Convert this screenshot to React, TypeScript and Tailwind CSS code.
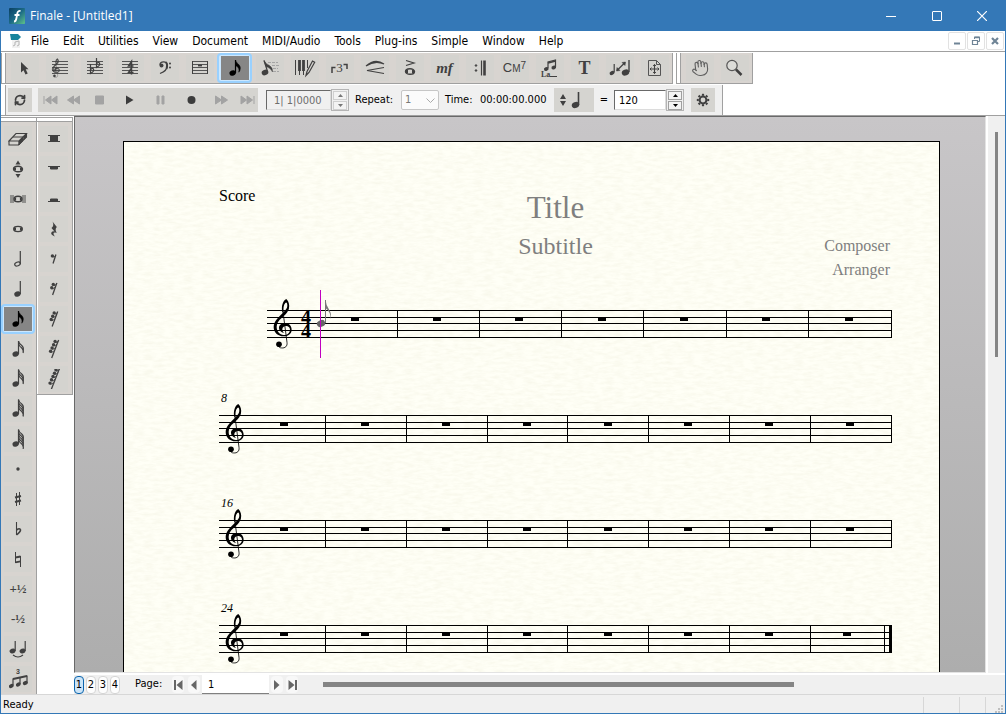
import type { ReactNode } from 'react';
import { Hand, RefreshCw } from 'lucide-react';

const MENUS = ['File', 'Edit', 'Utilities', 'View', 'Document', 'MIDI/Audio', 'Tools', 'Plug-ins', 'Simple', 'Window', 'Help'];

const INK = '#404040';

/* ---------- shared music shapes ---------- */

// drawn in a 60x150 box, the staff starts 34 units from the top
function Clef({ transform, color = '#000' }: { transform?: string; color?: string }) {
  return (
    <g transform={transform} fill={color}>
      <path d="M28 40C24 22 30 4 40 0C48 8 50 18 48 28C46 40 34 50 26 57C16 65 11 74 11 84C11 97 20 107 32 108C44 108 51 101 51 92C51 84 44 80 38 81C31 82 26 88 29 96C30 99 33 101 33 102C24 100 18 94 18 87C18 77 27 72 36 72C47 72 56 80 56 92C56 104 46 112 32 112C14 112 2 100 2 84C2 68 14 58 24 47C32 39 43 30 43 20C43 12 40 8 37 12C31 18 31 28 32 40Z" />
      <path d="M30 38L42 130C44 142 36 148 26 147C20 147 18 144 16 142" fill="none" stroke={color} strokeWidth="2.5" />
      <circle cx="18" cy="136" r="8.5" />
    </g>
  );
}

function Head({ x, y, r = 3.1, color = INK, hollow = false }: { x: number; y: number; r?: number; color?: string; hollow?: boolean }) {
  return (
    <ellipse
      cx={x}
      cy={y}
      rx={hollow ? r - 0.4 : r}
      ry={hollow ? r * 0.55 : r * 0.78}
      transform={`rotate(-22 ${x} ${y})`}
      fill={hollow ? 'none' : color}
      stroke={hollow ? color : 'none'}
      strokeWidth="1.2"
    />
  );
}

function NoteIcon({ flags = 0, hollow = false, color = INK }: { flags?: number; hollow?: boolean; color?: string }) {
  const dx = flags ? 7.7 : 9.5;
  const stem = dx + 2.8;
  const top = flags > 2 ? 0.5 : 2;
  return (
    <svg width="20" height="20" viewBox="0 0 20 20" fill="none">
      <Head x={dx} y={15} r={3.3} hollow={hollow} color={color} />
      <path d={`M${stem} 15V${top}`} stroke={color} strokeWidth="1.2" />
      {flags === 1 && <path d="M10.500 2C11 5.500 15.800 6.500 15.300 10.500Q15.200 12.500 13.800 14.200Q15 9.500 10.500 7.500Z" fill={color} stroke={color} strokeWidth=".5" />}
      {flags > 1 &&
        Array.from({ length: flags }, (_, i) => (
          <path key={i} d={`M${stem} ${top + i * 2.5}q.5 2.500 3 4.300t1.600 5.200`} stroke={color} strokeWidth="1.2" />
        ))}
    </svg>
  );
}

function RestIcon({ count }: { count: number }) {
  const h = 6 + count * 3;
  const top = 10 - h / 2;
  const slant = count * 0.9;
  return (
    <svg width="20" height="20" viewBox="0 0 20 20" fill={INK}>
      <path d={`M${11 + slant} ${top}L${9.5 - slant / 2} ${top + h}`} stroke={INK} strokeWidth="1.3" />
      {Array.from({ length: count }, (_, i) => {
        const x = 7.5 + slant - i * 1.5;
        const y = top + 1.4 + i * 3.3;
        return (
          <g key={i}>
            <circle cx={x} cy={y} r="1.7" />
            <path d={`M${x} ${y + 1}q2 .7 3.400 -1.700`} fill="none" stroke={INK} strokeWidth=".9" />
          </g>
        );
      })}
    </svg>
  );
}

function Svg({ children, size = 20 }: { children: ReactNode; size?: number }) {
  return (
    <svg width={size} height={size} viewBox={`0 0 ${size} ${size}`} fill="none" stroke={INK}>
      {children}
    </svg>
  );
}

const staffLines = [4, 7, 10, 13, 16].map((y) => <path key={y} d={`M2 ${y - 0.5}h16`} stroke="#555" />);

/* ---------- tool definitions ---------- */

type Tool = { label: string; icon: ReactNode; active?: boolean };

const MAIN_TOOLS: Tool[] = [
  {
    label: 'Selection',
    icon: <Svg><path d="M6 4v10.500l2.500-2.300L10.500 16.500l2.200-1-2-4.200H13.500Z" fill={INK} stroke="none" /></Svg>,
  },
  {
    label: 'Staff',
    icon: <Svg>{staffLines}<g stroke={INK} strokeWidth="3"><Clef color={INK} transform="translate(2 .5) scale(.135 .128)" /></g></Svg>,
  },
  {
    label: 'Key Signature',
    icon: (
      <Svg>
        {staffLines}
        <path d="M5.500 6v9.500q4-2 3-4.500Q7 9.500 5.500 12M11.500 0v9.500q4-2 3-4.500Q13 3.500 11.500 6" strokeWidth="1.200" />
      </Svg>
    ),
  },
  {
    label: 'Time Signature',
    icon: <Svg>{staffLines}<path d="M11.500 10V3.500L8.500 8h5M11.500 16.500V10L8.500 14.500h5" strokeWidth="1.500" /></Svg>,
  },
  {
    label: 'Clef',
    icon: (
      <Svg>
        <circle cx="6.500" cy="7.500" r="2" fill={INK} stroke="none" />
        <path d="M5 7C5 3 12 2.500 12.300 7.500C12.300 11.500 9 14 5 15.500" strokeWidth="1.300" />
        <path d="M11 4q2 3 .5 7" strokeWidth="1.800" />
        <circle cx="15" cy="5.500" r="1" fill={INK} stroke="none" />
        <circle cx="15" cy="9.500" r="1" fill={INK} stroke="none" />
      </Svg>
    ),
  },
  {
    label: 'Measure',
    icon: <Svg>{staffLines}<path d="M2.500 3v13M17.500 3v13" /><path d="M8 7.500h4" strokeWidth="1.800" /></Svg>,
  },
  { label: 'Simple Entry', icon: <NoteIcon flags={1} color="#000" />, active: true },
  {
    label: 'Speedy Entry',
    icon: (
      <Svg>
        <path d="M8 4.500h10M12 7.500h7M13 10.500h5M13 13.500h6" stroke="#a5a5a5" strokeDasharray="3 1" />
        <Head x={5} y={14.5} r={3.4} />
        <path d="M7.700 14L4 2.500" strokeWidth="1.200" />
        <path d="M4 2.500Q6 6 9.500 7.500Q13 9.500 12.500 14Q11 10 6 8.500Z" fill={INK} strokeWidth=".4" />
      </Svg>
    ),
  },
  {
    label: 'HyperScribe',
    icon: (
      <Svg size={22}>
        <path d="M1.500 3v15M16 3" />
        <path d="M5.500 3v11M9.500 3v11" strokeWidth="2.800" />
        <path d="M5.500 13v5M9.500 13v5M13.500 3v8" />
        <path d="M12 18.500l1-4L18.500 4l2.200 1.300L15 15.500Z" strokeWidth="1.200" />
      </Svg>
    ),
  },
  {
    label: 'Tuplet',
    icon: (
      <>
        <svg width="5" height="12" viewBox="0 0 5 12"><path d="M1 11V5.500h3.500" fill="none" stroke={INK} strokeWidth="1.500" /></svg>
        <span className="text-[13px] leading-4">3</span>
        <svg width="5" height="12" viewBox="0 0 5 12"><path d="M.5 2.500H4V7" fill="none" stroke={INK} strokeWidth="1.500" /></svg>
      </>
    ),
  },
  {
    label: 'Smart Shape',
    icon: <Svg><path d="M1 8q9-8 18-2Q10 2 1 8M19 9.500L2 12.500l17 3" strokeWidth="1.100" /></Svg>,
  },
  {
    label: 'Articulation',
    icon: <Svg><path d="M6 2.500l8 2.500L6 7.500" strokeWidth="1.200" /><ellipse cx="10" cy="13.500" rx="4.500" ry="2.800" strokeWidth="1.400" /><path d="M7 12v3M13 12v3" strokeWidth="2" /></Svg>,
  },
  { label: 'Expression', icon: <span className="text-[15px] leading-4 font-bold italic">mf</span> },
  {
    label: 'Repeat',
    icon: <Svg><path d="M11.500 2.500v15" strokeWidth="1.200" /><path d="M14.500 2.500v15" strokeWidth="2.600" /><circle cx="6" cy="7.500" r=".8" fill={INK} /><circle cx="6" cy="12.500" r=".8" fill={INK} /></Svg>,
  },
  {
    label: 'Chord',
    icon: <span className="flex font-['Liberation_Sans'] text-[13px] leading-4">C<span className="pt-px text-[10px]">M</span><span className="-mt-0.5 text-[10px]">7</span></span>,
  },
  {
    label: 'Lyric',
    icon: (
      <Svg>
        <path d="M8 10V4L15.500 2v7" strokeWidth="1.200" />
        <path d="M8 5L15.500 3" strokeWidth="1.800" />
        <Head x={6.3} y={11} r={2.4} />
        <Head x={13.8} y={9.5} r={2.4} />
        <text x="1" y="19" fontSize="8" fontFamily="Liberation Serif" fontWeight="bold" fill={INK} stroke="none">La</text>
        <path d="M10 18.500h7" />
      </Svg>
    ),
  },
  { label: 'Text', icon: <span className="text-lg leading-5 font-bold">T</span> },
  {
    label: 'Resize',
    icon: (
      <Svg size={24}>
        <Head x={4} y={17} r={2.5} />
        <path d="M6.200 16.500V8" strokeWidth="1.200" />
        <Head x={17.5} y={16.5} r={3.8} />
        <path d="M21 16V4" strokeWidth="1.400" />
        <path d="M9 14.500l8-8" strokeWidth="1.200" />
        <path d="M17.500 6l-.5 3.500-3-3ZM8.500 15l.5-3.500 3 3Z" fill={INK} strokeWidth=".5" />
      </Svg>
    ),
  },
  {
    label: 'Page Layout',
    icon: <Svg><path d="M3.500 2.500h8l4 4v11h-12ZM11.500 2.500v4h4" stroke="#555" /><path d="M9.500 6.500v9M5 11h9" strokeWidth="1.100" /><path d="M8 8l1.500-1.500L11 8M8 14l1.500 1.500L11 14M6.500 9.500L5 11l1.500 1.500M12.500 9.500L14 11l-1.500 1.500" strokeWidth=".9" /></Svg>,
  },
];

const VIEW_TOOLS: Tool[] = [
  { label: 'Hand Grabber', icon: <Hand size={18} color="#606060" strokeWidth={1.5} className="-rotate-6" /> },
  {
    label: 'Zoom',
    icon: <Svg><circle cx="7" cy="7.500" r="5.200" fill="#dcdcd8" stroke="#555" strokeWidth="1.200" /><path d="M11 11.500l5.500 5.500" strokeWidth="2.500" /></Svg>,
  },
];

const ENTRY_TOOLS: Tool[] = [
  {
    label: 'Eraser',
    icon: <Svg><path d="M1 12L8 4.500h10.500L11 12ZM1 12v4h9.500L18.500 8V4.500" strokeWidth="1.100" /><path d="M11 12v4M5 8l10.500 0" strokeWidth="1.100" /><path d="M11 12l4-4v4l-4 4ZM15.500 7.500l3-3V8l-3 3Z" fill={INK} strokeWidth=".5" /></Svg>,
  },
  {
    label: 'Repitch',
    icon: <Svg><path d="M10 1.500l2.500 4h-5ZM10 19l2.500-4h-5Z" fill={INK} stroke="none" /><ellipse cx="10" cy="10" rx="4.500" ry="2.800" strokeWidth="1.400" /><path d="M7 8.500v3M13 8.500v3" strokeWidth="2" /></Svg>,
  },
  {
    label: 'Double Whole Note',
    icon: <Svg><path d="M3 6v8M5 6v8M15 6v8M17 6v8" strokeWidth=".9" /><ellipse cx="10" cy="10" rx="4" ry="2.800" strokeWidth="1.400" /><path d="M7.200 8.500v3M12.800 8.500v3" strokeWidth="1.800" /></Svg>,
  },
  { label: 'Whole Note', icon: <Svg><ellipse cx="10" cy="10" rx="4.300" ry="2.600" strokeWidth="1.400" /><path d="M7 8.500v3M13 8.500v3" strokeWidth="2" /></Svg> },
  { label: 'Half Note', icon: <NoteIcon hollow /> },
  { label: 'Quarter Note', icon: <NoteIcon /> },
  { label: 'Eighth Note', icon: <NoteIcon flags={1} color="#000" />, active: true },
  { label: '16th Note', icon: <NoteIcon flags={2} /> },
  { label: '32nd Note', icon: <NoteIcon flags={3} /> },
  { label: '64th Note', icon: <NoteIcon flags={4} /> },
  { label: '128th Note', icon: <NoteIcon flags={5} /> },
  { label: 'Dot', icon: <Svg><circle cx="10" cy="10" r="1.700" fill={INK} stroke="none" /></Svg> },
  { label: 'Sharp', icon: <Svg><path d="M8.500 4v13M11.500 3v13" /><path d="M7 8.500l6-1.500M7 13l6-1.500" strokeWidth="1.900" /></Svg> },
  { label: 'Flat', icon: <Svg><path d="M8.500 3v13" strokeWidth="1.100" /><path d="M8.500 16C11 14 12.500 12.500 12.500 11Q12 8.500 8.500 11" strokeWidth="1.600" /></Svg> },
  { label: 'Natural', icon: <Svg><path d="M7.500 3v11M12.500 7v11" /><path d="M7.500 8.500l5-1M7.500 13.300l5-1" strokeWidth="1.800" /></Svg> },
  { label: 'Half Step Up', icon: <span className="text-[13px] leading-4 font-bold">+½</span> },
  { label: 'Half Step Down', icon: <span className="text-[13px] leading-4 font-bold">-½</span> },
  {
    label: 'Tie',
    icon: <Svg><Head x={4.5} y={12} r={3} /><path d="M7.200 12V2M17.200 12V2" strokeWidth="1.200" /><Head x={14.5} y={12} r={3} /><path d="M5 16q5 4 10 0" strokeWidth="1.200" /></Svg>,
  },
  {
    label: 'Tuplet Entry',
    icon: (
      <Svg>
        <text x="8" y="5" fontSize="7" fontWeight="bold" fontFamily="Liberation Sans" fill={INK} stroke="none">3</text>
        <path d="M5 16.500V9.500M19 6.500v7.500M12 15V8" strokeWidth="1.200" />
        <path d="M5 10L19 7" strokeWidth="1.800" />
        <Head x={3.3} y={17} r={2.5} />
        <Head x={10.3} y={15.5} r={2.5} />
        <Head x={17.3} y={14} r={2.5} />
      </Svg>
    ),
  },
];

const REST_TOOLS: Tool[] = [
  { label: 'Double Whole Rest', icon: <Svg><path d="M4 6.500h12M4 12.500h12" /><path d="M6.500 7h7v5h-7Z" fill={INK} /></Svg> },
  { label: 'Whole Rest', icon: <Svg><path d="M4 7.500h12" /><path d="M6.500 7.500h7v2.500h-7Z" fill={INK} /></Svg> },
  { label: 'Half Rest', icon: <Svg><path d="M4 12.500h12" /><path d="M6.500 10h7v2h-7Z" fill={INK} /></Svg> },
  {
    label: 'Quarter Rest',
    icon: <Svg><path d="M8.500 2.500L12.800 8Q10.500 10.500 12.800 13.800Q9.500 13 9.500 14.500T11 17.500Q6 15.500 7.500 13.200Q8.500 12 10.500 12.500L7.500 9Q10.500 6.500 8.500 2.500Z" fill={INK} stroke="none" /></Svg>,
  },
  { label: 'Eighth Rest', icon: <RestIcon count={1} /> },
  { label: '16th Rest', icon: <RestIcon count={2} /> },
  { label: '32nd Rest', icon: <RestIcon count={3} /> },
  { label: '64th Rest', icon: <RestIcon count={4} /> },
  { label: '128th Rest', icon: <RestIcon count={5} /> },
];

function ToolButton({ label, icon, active, slim }: Tool & { slim?: boolean }) {
  return (
    <button
      type="button"
      aria-label={label}
      aria-pressed={!!active}
      className={`flex h-[30px] shrink-0 items-center justify-center rounded-sm border-2 ${slim ? 'w-[34px]' : 'w-[35px]'} ${active ? 'border-[#99d1ff] bg-[#cce8ff]' : 'border-transparent'}`}
    >
      <span
        className={`flex w-7 items-center justify-center font-['Liberation_Serif',serif] text-[#404040] ${active ? 'h-6 bg-[#868686]' : 'h-[26px] bg-[#d4d3cf]'}`}
      >
        {icon}
      </span>
    </button>
  );
}

function Grip() {
  return <div className="mr-px h-[30px] w-[5px] shrink-0 border-x border-[#a0a0a0] bg-white" />;
}

/* ---------- window chrome ---------- */

function TitleBar() {
  return (
    <header className="flex h-[31px] shrink-0 items-center bg-[#3478b7] pl-[9px] text-white">
      <svg width="16" height="16" viewBox="0 0 16 16">
        <defs>
          <linearGradient id="logo" x1="0" y1="0" x2="1" y2="1">
            <stop offset="0" stopColor="#0a3f63" />
            <stop offset=".5" stopColor="#1b6a86" />
            <stop offset="1" stopColor="#5fc38a" />
          </linearGradient>
        </defs>
        <rect width="16" height="16" rx="1" fill="url(#logo)" />
        <path d="M5 13.500Q7 13.500 7.500 10L8.300 5.500Q8.800 2.500 11.500 3M5.500 7h5" fill="none" stroke="#fff" strokeWidth="1.800" />
      </svg>
      <h1 className="ml-[5px] flex-1 font-['Open_Sans',sans-serif] text-xs">Finale - [Untitled1]</h1>
      <button type="button" aria-label="Minimize" className="flex h-full w-[46px] items-center justify-center">
        <svg width="10" height="10"><path d="M0 5.500h10" stroke="#fff" /></svg>
      </button>
      <button type="button" aria-label="Maximize" className="flex h-full w-[45px] items-center justify-center">
        <svg width="10" height="10"><rect x=".5" y=".5" width="9" height="9" rx=".5" fill="none" stroke="#fff" /></svg>
      </button>
      <button type="button" aria-label="Close" className="mr-px flex h-full w-[46px] items-center justify-center">
        <svg width="10" height="10"><path d="M0 0l10 10M10 0L0 10" stroke="#fff" strokeWidth="1.200" /></svg>
      </button>
    </header>
  );
}

function MenuBar() {
  const box = 'flex h-[18px] w-[18px] items-center justify-center rounded-xs border border-[#e2e2e2] bg-white';
  return (
    <nav className="flex h-[21px] shrink-0 items-center border-b border-[#a0a0a0] bg-white pr-px pl-2">
      <svg width="14" height="16" viewBox="0 0 14 16">
        <path d="M1 1h8l3 3-3 3H2Z" fill="#17849c" />
        <path d="M3 7h8v8H3Z" fill="#f1f1f1" />
        <path d="M4 13l2-1V9l4-1v4l-2 1" fill="none" stroke="#b5b5b5" />
      </svg>
      <ul className="ml-px flex flex-1 text-xs text-black">
        {MENUS.map((menu) => (
          <li key={menu}>
            <button type="button" className="px-[7px]">{menu}</button>
          </li>
        ))}
      </ul>
      <div className="flex gap-px">
        <button type="button" aria-label="Minimize document" className={box}>
          <svg width="8" height="8"><path d="M1 6.500h6" stroke="#6f8496" strokeWidth="2" /></svg>
        </button>
        <button type="button" aria-label="Restore document" className={box}>
          <svg width="10" height="10" fill="none" stroke="#6f8496"><path d="M3.500 3V1h5v4.500H7" /><path d="M3 1.500h6" strokeWidth="1.500" /><path d="M1.500 4.500h5v4h-5Z" strokeWidth="1.200" /></svg>
        </button>
        <button type="button" aria-label="Close document" className={box}>
          <svg width="8" height="8"><path d="M1 1l6 6M7 1L1 7" stroke="#6f8496" strokeWidth="2.200" /></svg>
        </button>
      </div>
    </nav>
  );
}

function MainToolbar() {
  return (
    <div className="flex shrink-0 pt-px">
      <div className="flex border-r border-b border-[#a0a0a0] bg-[#d8d4d0]">
        <Grip />
        {MAIN_TOOLS.map((tool) => <ToolButton key={tool.label} {...tool} />)}
      </div>
      <div className="ml-[3px] flex border-r border-b border-[#a0a0a0] bg-[#d8d4d0]">
        <Grip />
        {VIEW_TOOLS.map((tool) => <ToolButton key={tool.label} {...tool} />)}
      </div>
    </div>
  );
}

function Spinner({ label, dim }: { label: string; dim?: boolean }) {
  const color = dim ? '#777' : '#000';
  const cls = `flex h-[9px] w-3.5 items-center justify-center border ${dim ? 'border-[#cfcfcf]' : 'border-[#a0a0a0]'} bg-[#f3f3f3]`;
  return (
    <span className="flex h-[22px] w-[18px] flex-col items-center justify-center gap-px border border-[#b4b4b4]">
      <button type="button" aria-label={`${label} up`} className={cls}>
        <svg width="5" height="3"><path d="M0 3L2.500 0 5 3Z" fill={color} /></svg>
      </button>
      <button type="button" aria-label={`${label} down`} className={cls}>
        <svg width="5" height="3"><path d="M0 0L2.500 3 5 0Z" fill={color} /></svg>
      </button>
    </span>
  );
}

const TRANSPORT = [
  { label: 'Rewind to Beginning', width: 'w-6', d: 'M1 2v8M8 2v8L2.500 6ZM14 2v8L8.500 6Z', dim: true },
  { label: 'Rewind', width: 'w-[22px]', d: 'M7.500 2v8L1.500 6ZM13.500 2v8L7.500 6Z', dim: true },
  { label: 'Stop', width: 'w-[30px]', d: 'M3.500 2h8v8h-8Z', dim: true },
  { label: 'Play', width: 'w-[30px]', d: 'M4 1.500v9L11.500 6Z' },
  { label: 'Pause', width: 'w-[32px]', d: 'M4 2h2v8h-2ZM9 2h2v8h-2Z', dim: true },
  { label: 'Record', width: 'w-[30px]', d: 'M3.500 6a4 4 0 1 0 8 0a4 4 0 1 0-8 0Z' },
  { label: 'Fast Forward', width: 'w-[30px]', d: 'M1.500 2v8l6-4ZM7.500 2v8l6-4Z', dim: true },
  { label: 'Forward to End', width: 'w-[22px]', d: 'M1 2v8l5.500-4ZM7 2v8l5.500-4ZM14 2v8', dim: true },
];

function PlaybackBar() {
  return (
    <div className="mt-px flex shrink-0">
      <div className="flex h-[30px] items-center border-r border-[#a0a0a0] bg-[#f0f0f0] pr-[7px] text-[11px] text-black">
        <div className="h-full w-[5px] border-r border-[#a0a0a0] bg-white" />
        <button type="button" aria-label="Loop" className="ml-0.5 flex h-6 w-6 items-center justify-center bg-[#d5d4d0]">
          <RefreshCw size={12} color={INK} strokeWidth={3.5} />
        </button>
        <div className="ml-1.5 flex h-6 items-center bg-[#d5d4d0]">
          {TRANSPORT.map(({ label, width, d, dim }) => (
            <button key={label} type="button" aria-label={label} className={`flex h-6 items-center justify-center ${width}`}>
              <svg width="15" height="12" viewBox="0 0 15 12">
                <path d={d} fill={dim ? '#a3a3a3' : '#3c3c3c'} stroke={dim ? '#a3a3a3' : 'none'} />
              </svg>
            </button>
          ))}
        </div>
        <input
          aria-label="Counter"
          defaultValue="1| 1|0000"
          className="ml-2 h-5 w-[65px] border border-[#696969] border-r-[#dcdcdc] border-b-[#dcdcdc] bg-[#f0f0f0] pl-[7px] text-[11px] text-[#6d6d6d]"
        />
        <Spinner label="Counter" dim />
        <label htmlFor="repeat" className="ml-1.5 w-[46px]">Repeat:</label>
        <span className="relative">
          <select id="repeat" defaultValue="1" className="block h-5 w-[38px] appearance-none rounded-xs border border-[#c6c6c6] bg-[#fbfbfb] pl-[3px] text-[11px] text-[#777]">
            <option>1</option>
            <option>2</option>
          </select>
          <svg width="9" height="6" className="pointer-events-none absolute top-2 right-1"><path d="M.5 .5l4 4 4-4" fill="none" stroke="#aaa" /></svg>
        </span>
        <span className="ml-1.5 w-[35px]">Time:</span>
        <span className="w-[74px]">00:00:00.000</span>
        <button type="button" aria-label="Beat unit" className="flex h-6 w-10 items-center gap-0.5 bg-[#d5d4d0] pl-1.5">
          <svg width="6" height="12"><path d="M3 0l3 5H0ZM3 12l3-5H0Z" fill={INK} /></svg>
          <Svg><Head x={7.5} y={15} r={3.8} /><path d="M10.500 15V2" strokeWidth="1.600" /></Svg>
        </button>
        <label htmlFor="tempo" className="w-5 text-center">=</label>
        <input id="tempo" defaultValue="120" className="h-5 w-[52px] border border-[#696969] border-r-[#dcdcdc] border-b-[#dcdcdc] bg-white pl-1 text-[11px]" />
        <Spinner label="Tempo" />
        <button type="button" aria-label="Playback settings" className="ml-[7px] flex h-6 w-6 items-center justify-center bg-[#d5d4d0]">
          <svg width="14" height="14" viewBox="0 0 14 14" fill="none" stroke={INK}>
            <circle cx="7" cy="7" r="3.400" strokeWidth="2" />
            {[0, 45, 90, 135, 180, 225, 270, 315].map((a) => (
              <path key={a} d="M7 .8v2" strokeWidth="2.200" transform={`rotate(${a} 7 7)`} />
            ))}
          </svg>
        </button>
      </div>
    </div>
  );
}

function Palette({ tools }: { tools: Tool[] }) {
  return (
    <div className="shrink-0 border-r border-b border-[#a0a0a0] bg-[#d8d4d0] shadow-[inset_1px_0_white] first:shadow-none">
      <div className="mb-0.5 h-[5px] border-y border-[#a0a0a0] bg-white" />
      <div className="pr-px">
        {tools.map((tool) => <ToolButton key={tool.label} {...tool} slim />)}
      </div>
    </div>
  );
}

/* ---------- score ---------- */

type System = { number?: number; start: number; clef: number; bars: number[]; rests: number[]; last?: boolean };

const BARS = [106, 187, 268, 348, 429, 510, 591, 672];
const RESTS = [61, 142, 223, 304, 385, 465, 546, 627];

const SYSTEMS: System[] = [
  { start: 48, clef: 54, bars: [178, 260, 342, 424, 507, 589, 672], rests: [132, 214, 296, 379, 461, 543, 626] },
  { number: 8, start: 0, clef: 6, bars: BARS, rests: RESTS },
  { number: 16, start: 0, clef: 6, bars: BARS, rests: RESTS },
  { number: 24, start: 0, clef: 6, bars: [...BARS.slice(0, 7), 665], rests: [...RESTS.slice(0, 7), 624], last: true },
];

function Staff({ number, start, clef, bars, rests, last }: System) {
  return (
    <svg viewBox="0 0 673 105" className="block w-full">
      <g shapeRendering="crispEdges">
        {[25, 32, 38, 45, 52].map((y) => <rect key={y} x={start} y={y} width={673 - start} height="1" />)}
        {bars.map((x) => <rect key={x} x={x} y="25" width="1" height="28" />)}
        {rests.map((x) => <rect key={x} x={x} y="32" width="8" height="4" />)}
        {last && <rect x="670" y="25" width="3" height="28" />}
      </g>
      <Clef transform={`translate(${clef} 14) scale(.333)`} />
      {number && <text x="2" y="12" fontSize="12" fontStyle="italic" fontFamily="Liberation Serif">{number}</text>}
      {!number && (
        <>
          <g fontSize="20" fontWeight="bold" fontFamily="Liberation Serif">
            <text x="82" y="39">4</text>
            <text x="82" y="53">4</text>
          </g>
          <Head x={102} y={38.5} r={4.3} color="#666" />
          <path d="M106.500 38V15" stroke="#777" />
          <path d="M106.500 15Q107 20 110 24.500T111.500 34Q112 27 106.500 23Z" fill="#777" />
          <rect x="101" y="5" width="1" height="68" fill="#c000c0" />
        </>
      )}
    </svg>
  );
}

function ScorePage() {
  return (
    <article className="relative mt-6 mr-[45px] ml-12 border border-black bg-[#fffff6] pr-[47px] pl-[95px] font-['Liberation_Serif',serif]">
      <svg className="absolute inset-0 h-full w-full" aria-hidden="true">
        <filter id="paper">
          <feTurbulence type="fractalNoise" baseFrequency=".1 .35" numOctaves="4" seed="4" />
          <feColorMatrix values="0 0 0 0 .85  0 0 0 0 .84  0 0 0 0 .7  .7 0 0 0 -.24" />
        </filter>
        <rect width="100%" height="100%" filter="url(#paper)" />
      </svg>
      <div className="relative">
        <div className="grid h-[143px] grid-cols-3 pt-11 text-base">
          <p className="leading-5">Score</p>
          <div className="pt-0.5 text-center text-[#7f7f7f]">
            <h2 className="text-[31px] leading-10">Title</h2>
            <p className="text-2xl leading-9">Subtitle</p>
          </div>
          <div className="pt-12 pr-0.5 text-right leading-6 text-[#7f7f7f]">
            <p>Composer</p>
            <p>Arranger</p>
          </div>
        </div>
        {SYSTEMS.map((system) => <Staff key={system.number ?? 1} {...system} />)}
      </div>
    </article>
  );
}

function PageBar() {
  const arrow = 'flex h-[17px] w-3 items-center justify-center rounded-sm bg-[#f8f8f8]';
  return (
    <div className="flex h-[19px] shrink-0 items-center bg-[#f0f0f0] text-[11px] text-black">
      <div className="flex gap-0.5">
        {[1, 2, 3, 4].map((n) => (
          <button
            key={n}
            type="button"
            className={`h-[18px] w-2.5 rounded border text-center leading-4 ${n === 1 ? 'border-[#0a64ad] bg-[#cce4f7]' : 'border-[#d5d5d5] bg-[#fdfdfd]'}`}
          >
            {n}
          </button>
        ))}
      </div>
      <label htmlFor="page" className="ml-[15px] w-[37px]">Page:</label>
      <button type="button" aria-label="First page" className={arrow}>
        <svg width="9" height="10"><path d="M0 0h2v10H0ZM8.500 0v10L2.500 5Z" fill="#666" /></svg>
      </button>
      <button type="button" aria-label="Previous page" className={`ml-1 ${arrow}`}>
        <svg width="6" height="10"><path d="M5.500 0v10L0 5Z" fill="#666" /></svg>
      </button>
      <input id="page" defaultValue="1" className="ml-0.5 h-[19px] w-[67px] border-b border-[#808080] bg-white pl-1.5 text-[11px]" />
      <button type="button" aria-label="Next page" className={`ml-0.5 ${arrow}`}>
        <svg width="6" height="10"><path d="M0 0v10L5.500 5Z" fill="#666" /></svg>
      </button>
      <button type="button" aria-label="Last page" className={`ml-[3px] ${arrow}`}>
        <svg width="9" height="10"><path d="M7 0h2v10H7ZM.5 0v10L6.500 5Z" fill="#666" /></svg>
      </button>
      <div className="ml-[25px] flex-1">
        <div className="h-[5px] w-[69%] bg-[#858585]" />
      </div>
    </div>
  );
}

function StatusBar() {
  return (
    <footer className="flex h-[19px] shrink-0 items-center border-t border-[#d7d7d7] bg-[#f0f0f0] pt-0.5 pl-0.5 text-[11px] text-black">
      <span className="flex-1">Ready</span>
      <span className="h-4 w-9 border-l border-[#d7d7d7]" />
      <span className="h-4 w-[26px] border-l border-[#d7d7d7]" />
      <span className="flex h-4 w-5 items-end justify-end border-l border-[#d7d7d7] pr-0.5">
        <svg width="8" height="8" fill="#bfbfbf">
          <path d="M6 0h2v2H6ZM3 3h2v2H3ZM6 3h2v2H6ZM0 6h2v2H0ZM3 6h2v2H3ZM6 6h2v2H6Z" />
        </svg>
      </span>
    </footer>
  );
}

export default function App() {
  return (
    <div className="flex h-screen flex-col overflow-hidden border-r border-b border-l border-[#3478b7] bg-white font-['DejaVu_Sans_Condensed','Noto_Sans',sans-serif]">
      <div className="-mx-px shrink-0">
        <TitleBar />
      </div>
      <MenuBar />
      <MainToolbar />
      <PlaybackBar />
      <main className="flex min-h-0 flex-1 border-t border-[#a0a0a0]">
        <div className="mr-px flex shrink-0 items-start overflow-hidden pt-px">
          <Palette tools={ENTRY_TOOLS} />
          <Palette tools={REST_TOOLS} />
        </div>
        <div className="flex min-w-0 flex-1 flex-col">
          <div className="flex min-h-0 flex-1">
            <section className="min-w-0 flex-1 overflow-hidden border-t border-r border-b border-l border-[#e3e3e3] border-t-[#696969] border-l-[#696969] bg-linear-to-b from-[#c8c6c8] to-[#adadad]">
              <ScorePage />
            </section>
            <div className="ml-0.5 w-[17px] shrink-0 bg-[#f0f0f0] pt-4 pl-[7px]">
              <div className="h-[225px] w-[3px] bg-[#858585]" />
            </div>
          </div>
          <div className="mt-0.5">
            <PageBar />
          </div>
        </div>
      </main>
      <StatusBar />
    </div>
  );
}
